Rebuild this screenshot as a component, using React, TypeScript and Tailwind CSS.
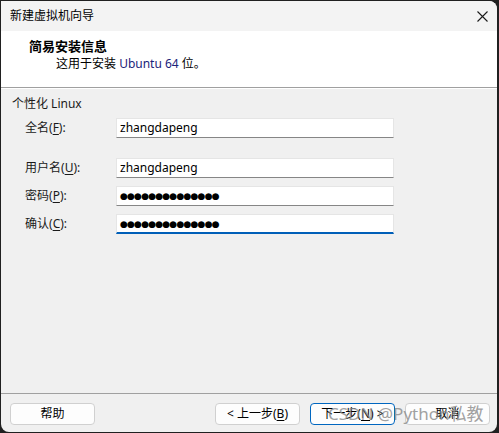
import React from "react";

const font = { fontFamily: '"Noto Sans", "Noto Sans CJK SC", sans-serif' };

function Field({ label, hot, value, password, focused, className }: { label: string; hot: string; value: string; password?: boolean; focused?: boolean; className?: string }) {
  return (
    <div className={"flex items-center h-[20px] " + (className ?? "")}>
      <div className="w-[91px] text-[12px] text-[#1a1a1a] leading-[16px]">
        {label}(<span className="underline underline-offset-2">{hot}</span>):
      </div>
      <div
        className={
          "w-[278px] h-[20px] bg-white border border-[#e5e5e5] flex items-center pl-[3px] " +
          (focused ? "border-b-2 border-b-[#005fb8]" : "border-b-[#868686]")
        }
      >
        {password ? (
          <span className="text-[9px] leading-[14px] tracking-[-0.8px] text-black" style={{ fontFamily: '"DejaVu Sans", sans-serif' }}>
            ●●●●●●●●●●●●●●
          </span>
        ) : (
          <span className="text-[12px] leading-[16px] text-black">{value}</span>
        )}
      </div>
    </div>
  );
}

export default function App() {
  return (
    <div className="w-[499px] h-[433px] bg-[#202020] pt-[1px] pl-[1px]" style={font}>
      <div className="relative w-[496px] h-[431px] bg-[#f0f0f0] rounded-tr-[8px] rounded-b-[8px] overflow-hidden flex flex-col">
        {/* title bar */}
        <div className="h-[30px] bg-[#f3f3f3] flex items-center justify-between pl-[9px] pr-[9px]">
          <span className="text-[12px] text-black leading-[16px]">新建虚拟机向导</span>
          <svg width="11" height="11" viewBox="0 0 11 11">
            <path d="M0.5 0.5 L10.5 10.5 M10.5 0.5 L0.5 10.5" stroke="#1a1a1a" strokeWidth="1.1" />
          </svg>
        </div>
        {/* header */}
        <div className="h-[56px] bg-white pl-[28px] pt-[7px]">
          <div className="text-[13px] font-bold leading-[16px] text-black">简易安装信息</div>
          <div className="text-[12px] leading-[16px] mt-[2px] pl-[27px] text-black">
            这用于安装 <span className="text-[#1b237a]">Ubuntu 64</span> 位。
          </div>
        </div>
        <div className="h-[2px] border-t border-[#a0a0a0] border-b border-b-white" />
        {/* body */}
        <div className="flex-1 pl-[11px] pt-[7px]">
          <div className="text-[12px] leading-[16px] text-[#1a1a1a]">个性化 Linux</div>
          <div className="pl-[13px] mt-[6px] flex flex-col">
            <Field label="全名" hot="F" value="zhangdapeng" />
            <Field label="用户名" hot="U" value="zhangdapeng" className="mt-[20px]" />
            <Field label="密码" hot="P" value="" password className="mt-[8px]" />
            <Field label="确认" hot="C" value="" password focused className="mt-[8px]" />
          </div>
        </div>
        {/* footer */}
        <div className="h-[39px] border-t border-[#a0a0a0] flex items-start pt-[9px] pl-[9px] pr-[7px]">
          <button className="w-[85px] h-[22px] rounded-[4px] border border-[#d0d0d0] bg-[#fdfdfd] text-[12px] text-black leading-[16px]">
            帮助
          </button>
          <div className="flex-1" />
          <div className="flex gap-[10px]">
            <button className="w-[85px] h-[22px] rounded-[4px] border border-[#d0d0d0] bg-[#fdfdfd] text-[12px] text-black leading-[16px]">
              &lt; 上一步(<span className="underline underline-offset-2">B</span>)
            </button>
            <button className="w-[85px] h-[22px] rounded-[4px] border border-[#0067c0] bg-[#fdfdfd] text-[12px] text-black leading-[16px]">
              下一步(<span className="underline underline-offset-2">N</span>) &gt;
            </button>
            <button className="w-[85px] h-[22px] rounded-[4px] border border-[#d0d0d0] bg-[#fdfdfd] text-[12px] text-black leading-[16px]">
              取消
            </button>
          </div>
        </div>
        {/* watermark */}
        <div className="absolute left-[327px] top-[401px] text-[17px] leading-[24px] text-[#8a8a8a] opacity-80 pointer-events-none whitespace-nowrap">
          CSDN @Python私教
        </div>
      </div>
    </div>
  );
}
